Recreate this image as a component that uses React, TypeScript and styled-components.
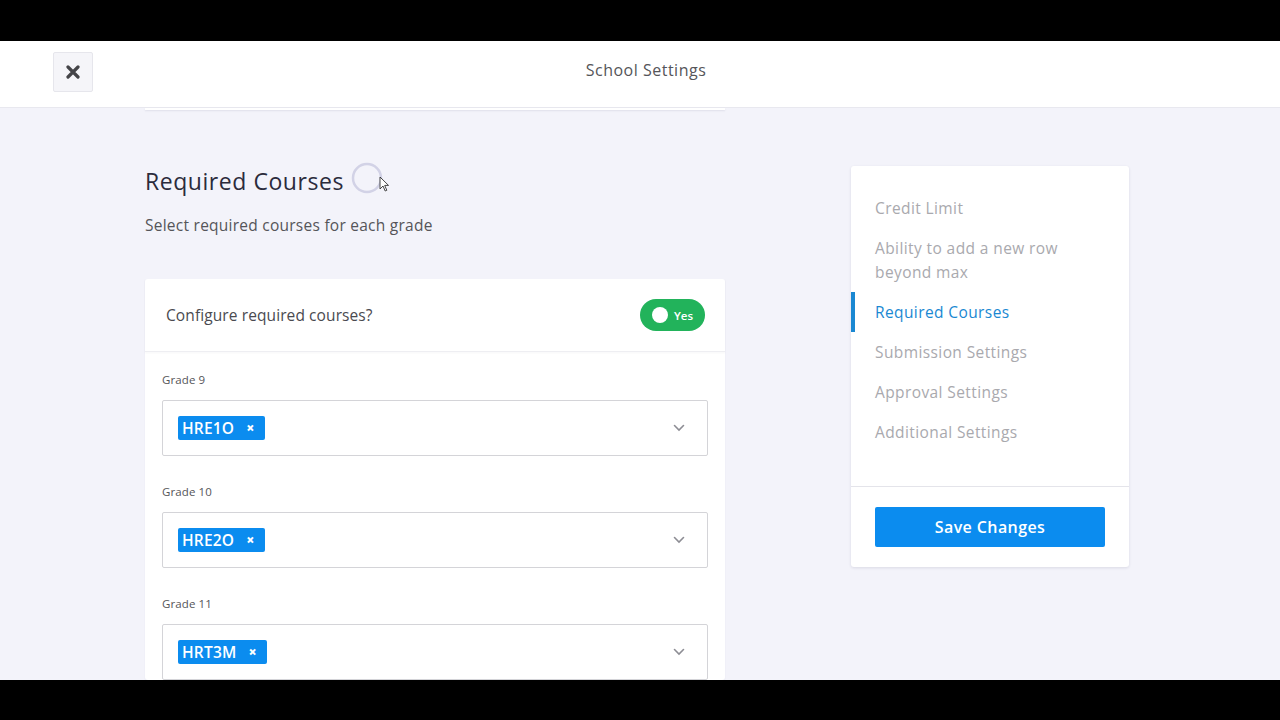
import * as React from "react";
import styled, { createGlobalStyle } from "styled-components";

const COLORS = {
  page: "#f3f3fa",
  text: "#2b2b3c",
  body: "#555559",
  muted: "#a9a9ae",
  blue: "#0b8cef",
  activeBlue: "#1a88d2",
  green: "#22b35b",
  border: "#d4d4d8",
};

const GlobalStyle = createGlobalStyle`
  html, body {
    margin: 0;
    padding: 0;
    background: #000;
  }
  body {
    font-family: "Open Sans", "Noto Sans", "Liberation Sans", sans-serif;
    -webkit-font-smoothing: antialiased;
  }
  * {
    box-sizing: border-box;
  }
`;

const Frame = styled.div`
  width: 1280px;
  height: 720px;
  display: flex;
  flex-direction: column;
  background: #000;
  overflow: hidden;
`;

const Letterbox = styled.div<{ h: number }>`
  height: ${(p) => p.h}px;
  flex: none;
  background: #000;
`;

const Screen = styled.div`
  flex: 1;
  display: flex;
  flex-direction: column;
  background: ${COLORS.page};
  overflow: hidden;
`;

const Header = styled.header`
  height: 67px;
  flex: none;
  background: #fff;
  border-bottom: 1px solid #e8e8ef;
  display: grid;
  grid-template-columns: 1fr auto 1fr;
  align-items: start;
  padding: 11px 53px 0;
`;

const CloseButton = styled.button`
  width: 40px;
  height: 40px;
  border: 1px solid #e6e6ec;
  border-radius: 2px;
  background: #f5f5f9;
  display: flex;
  align-items: center;
  justify-content: center;
  padding: 0;
  cursor: pointer;
`;

const HeaderTitle = styled.div`
  font-size: 16px;
  letter-spacing: 0.5px;
  line-height: 36px;
  color: ${COLORS.body};
  margin-left: 12px;
`;

const Body = styled.div`
  flex: 1;
  display: flex;
  align-items: flex-start;
  padding-left: 145px;
  gap: 126px;
`;

const MainColumn = styled.div`
  width: 580px;
  display: flex;
  flex-direction: column;
`;

// bottom edge of the settings card scrolled up under the header
const PrevCardEdge = styled.div`
  height: 2px;
  background: #fff;
  box-shadow: 0 1px 2px rgba(40, 40, 80, 0.1);
`;

const TitleRow = styled.div`
  display: flex;
  align-items: center;
  margin-top: 54px;
`;

const SectionTitle = styled.h2`
  margin: 0;
  font-size: 23px;
  font-weight: 400;
  letter-spacing: 0.55px;
  line-height: 34px;
  color: ${COLORS.text};
`;

const SpinnerWrap = styled.div`
  position: relative;
  width: 32px;
  height: 32px;
  margin-left: 7px;
  margin-top: -6px;
`;

const Pointer = styled.svg`
  position: absolute;
  left: 28px;
  top: 14px;
`;

const Subtitle = styled.p`
  margin: 17px 0 0;
  font-size: 15.5px;
  letter-spacing: 0.25px;
  line-height: 20px;
  color: ${COLORS.body};
`;

const Card = styled.section`
  margin-top: 44px;
  background: #fff;
  border-radius: 3px;
  box-shadow: 0 1px 2px rgba(40, 40, 80, 0.06);
`;

const ConfigRow = styled.div`
  height: 73px;
  display: flex;
  align-items: center;
  justify-content: space-between;
  padding: 0 20px 0 21px;
  border-bottom: 1px solid #eeeef2;
  box-shadow: 0 1px 2px rgba(40, 40, 80, 0.04);
`;

const ConfigLabel = styled.span`
  font-size: 15.5px;
  letter-spacing: 0.1px;
  color: #4a4a50;
`;

const Toggle = styled.div`
  width: 65px;
  height: 32px;
  border-radius: 16px;
  background: ${COLORS.green};
  display: flex;
  align-items: center;
  padding: 0 10px 0 12px;
  gap: 6px;
  color: #fff;
  font-size: 11.5px;
  font-weight: 600;
`;

const Knob = styled.span`
  width: 16px;
  height: 16px;
  border-radius: 50%;
  background: #fff;
  flex: none;
`;

const GradeList = styled.div`
  padding: 20px 17px 0;
  display: flex;
  flex-direction: column;
  gap: 28px;
`;

const GradeBlock = styled.div`
  display: flex;
  flex-direction: column;
  gap: 12px;
`;

const GradeLabel = styled.label`
  font-size: 11.5px;
  letter-spacing: 0.1px;
  line-height: 16px;
  color: ${COLORS.body};
`;

const Select = styled.div`
  height: 56px;
  border: 1px solid ${COLORS.border};
  border-radius: 2px;
  display: flex;
  align-items: center;
  justify-content: space-between;
  padding: 0 22px 0 15px;
  background: #fff;
`;

const Tag = styled.span`
  height: 24px;
  display: inline-flex;
  align-items: center;
  gap: 12px;
  padding: 0 10px 0 4px;
  border-radius: 2px;
  background: ${COLORS.blue};
  color: #fff;
  font-size: 15.5px;
  font-weight: 600;
  letter-spacing: 0.2px;
`;

const TagRemove = styled.span`
  font-size: 14px;
  font-weight: 800;
  line-height: 1;
`;

const SidePanel = styled.aside`
  width: 278px;
  margin-top: 58px;
  background: #fff;
  border-radius: 3px;
  box-shadow: 0 1px 3px rgba(40, 40, 80, 0.12);
`;

const NavList = styled.nav`
  padding: 22px 0 34px;
  border-bottom: 1px solid #e4e4ea;
`;

const NavItem = styled.div<{ active?: boolean }>`
  padding: 8px 30px 8px 20px;
  font-size: 15.5px;
  letter-spacing: 0.4px;
  line-height: 24px;
  color: ${(p) => (p.active ? COLORS.activeBlue : COLORS.muted)};
  border-left: 4px solid ${(p) => (p.active ? COLORS.activeBlue : "transparent")};
`;

const PanelFooter = styled.div`
  padding: 20px 24px;
`;

const SaveButton = styled.button`
  width: 100%;
  height: 40px;
  border: none;
  border-radius: 2px;
  background: ${COLORS.blue};
  color: #fff;
  font-family: inherit;
  font-size: 16px;
  font-weight: 600;
  letter-spacing: 0.4px;
  cursor: pointer;
`;

const Chevron = () => (
  <svg width="12" height="8" viewBox="0 0 12 8">
    <path d="M1.5 1.5 L6 6 L10.5 1.5" fill="none" stroke="#8d8d94" strokeWidth="1.6" strokeLinecap="round" />
  </svg>
);

const grades = [
  { label: "Grade 9", course: "HRE1O" },
  { label: "Grade 10", course: "HRE2O" },
  { label: "Grade 11", course: "HRT3M" },
];

const navItems = [
  "Credit Limit",
  "Ability to add a new row beyond max",
  "Required Courses",
  "Submission Settings",
  "Approval Settings",
  "Additional Settings",
];

export default function App() {
  return (
    <Frame>
      <GlobalStyle />
      <Letterbox h={41} />
      <Screen>
        <Header>
          <div>
            <CloseButton aria-label="Close">
              <svg width="14" height="14" viewBox="0 0 14 14">
                <path d="M2 2 L12 12 M12 2 L2 12" stroke="#444448" strokeWidth="3.2" strokeLinecap="round" />
              </svg>
            </CloseButton>
          </div>
          <HeaderTitle>School Settings</HeaderTitle>
          <div />
        </Header>
        <Body>
          <MainColumn>
            <PrevCardEdge />
            <TitleRow>
              <SectionTitle>Required Courses</SectionTitle>
              <SpinnerWrap>
                <svg width="32" height="32" viewBox="0 0 32 32">
                  <circle cx="16" cy="16" r="14" fill="none" stroke="#d2d2e6" strokeWidth="2.5" />
                </svg>
                <Pointer width="10" height="16" viewBox="0 0 10 16">
                  <path d="M1 1 L1 13 L4 10 L6.2 15 L7.8 14.3 L5.7 9.4 L9.5 9.4 Z" fill="#fff" stroke="#333" strokeWidth="0.9" strokeLinejoin="round" />
                </Pointer>
              </SpinnerWrap>
            </TitleRow>
            <Subtitle>Select required courses for each grade</Subtitle>
            <Card>
              <ConfigRow>
                <ConfigLabel>Configure required courses?</ConfigLabel>
                <Toggle>
                  <Knob />
                  Yes
                </Toggle>
              </ConfigRow>
              <GradeList>
                {grades.map((g) => (
                  <GradeBlock key={g.label}>
                    <GradeLabel>{g.label}</GradeLabel>
                    <Select>
                      <Tag>
                        {g.course}
                        <TagRemove>×</TagRemove>
                      </Tag>
                      <Chevron />
                    </Select>
                  </GradeBlock>
                ))}
              </GradeList>
            </Card>
          </MainColumn>
          <SidePanel>
            <NavList>
              {navItems.map((item) => (
                <NavItem key={item} active={item === "Required Courses"}>
                  {item}
                </NavItem>
              ))}
            </NavList>
            <PanelFooter>
              <SaveButton>Save Changes</SaveButton>
            </PanelFooter>
          </SidePanel>
        </Body>
      </Screen>
      <Letterbox h={40} />
    </Frame>
  );
}
